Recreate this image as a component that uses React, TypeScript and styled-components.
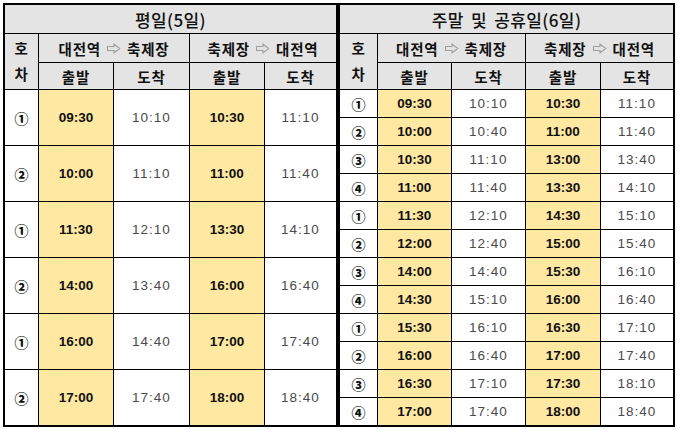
import styled, { createGlobalStyle } from 'styled-components';

type Row = [string, string, string, string, string];

const weekday: Row[] = [
  ['①', '09:30', '10:10', '10:30', '11:10'],
  ['②', '10:00', '11:10', '11:00', '11:40'],
  ['①', '11:30', '12:10', '13:30', '14:10'],
  ['②', '14:00', '13:40', '16:00', '16:40'],
  ['①', '16:00', '14:40', '17:00', '17:40'],
  ['②', '17:00', '17:40', '18:00', '18:40'],
];

const weekend: Row[] = [
  ['①', '09:30', '10:10', '10:30', '11:10'],
  ['②', '10:00', '10:40', '11:00', '11:40'],
  ['③', '10:30', '11:10', '13:00', '13:40'],
  ['④', '11:00', '11:40', '13:30', '14:10'],
  ['①', '11:30', '12:10', '14:30', '15:10'],
  ['②', '12:00', '12:40', '15:00', '15:40'],
  ['③', '14:00', '14:40', '15:30', '16:10'],
  ['④', '14:30', '15:10', '16:00', '16:40'],
  ['①', '15:30', '16:10', '16:30', '17:10'],
  ['②', '16:00', '16:40', '17:00', '17:40'],
  ['③', '16:30', '17:10', '17:30', '18:10'],
  ['④', '17:00', '17:40', '18:00', '18:40'],
];

const GlobalStyle = createGlobalStyle`
  body {
    margin: 0;
    background: #fff;
    font-family: 'Noto Sans CJK KR', 'Liberation Sans', sans-serif;
  }
`;

const Frame = styled.div`
  box-sizing: border-box;
  width: 672px;
  margin: 3px 0 0 3px;
  border: 2px solid #000;
  display: flex;
  background: #fff;
`;

const Panel = styled.div<{ $cols: string; $rows: number; $rowH: number; $divided?: boolean }>`
  display: grid;
  grid-template-columns: ${(p) => p.$cols};
  grid-template-rows: 28px 28px 26px repeat(${(p) => p.$rows}, ${(p) => p.$rowH}px);
  gap: 1px;
  background: #000;
  border-left: ${(p) => (p.$divided ? '4px double #000' : 'none')};
`;

const Cell = styled.div`
  display: flex;
  align-items: center;
  justify-content: center;
  background: #fff;
  color: #111;
  white-space: nowrap;
`;

const Title = styled(Cell)`
  grid-column: 1 / -1;
  background: #e4e4e4;
  font-size: 17px;
  font-weight: 500;
  letter-spacing: 0.4px;
  word-spacing: 3px;
`;

const HeadCell = styled(Cell)<{ $span?: number }>`
  grid-column: span ${(p) => p.$span ?? 1};
  background: #e4e4e4;
  font-size: 14.5px;
  font-weight: 700;
  letter-spacing: 0.8px;
`;

const BusHead = styled(HeadCell)`
  grid-row: span 2;
  flex-direction: column;
  justify-content: space-around;
  padding: 1px 0 3px;
`;

const ArrowSvg = styled.svg`
  margin: 0 6px 0 5px;
  flex-shrink: 0;
`;

const Arrow = () => (
  <ArrowSvg width="15" height="11" viewBox="0 0 15 11">
    <path d="M1.5 3.5H8V1.2L13.8 5.5 8 9.8V7.5H1.5Z" fill="none" stroke="#a0a0a0" strokeWidth="1.1" strokeLinejoin="miter" />
  </ArrowSvg>
);

const NumCell = styled(Cell)`
  font-size: 14px;
  font-weight: 900;
`;

const TimeCell = styled(Cell)<{ $depart?: boolean }>`
  font-family: 'Liberation Sans', Arial, sans-serif;
  font-size: 13.5px;
  background: ${(p) => (p.$depart ? '#fee8a2' : '#fff')};
  font-weight: ${(p) => (p.$depart ? 700 : 400)};
  color: ${(p) => (p.$depart ? '#111' : '#4a4a4a')};
  letter-spacing: ${(p) => (p.$depart ? '0' : '1px')};
`;

type ScheduleProps = {
  title: string;
  rows: Row[];
  cols: string;
  rowH: number;
  divided?: boolean;
};

// rows are flattened into the parent grid
const Row = styled.div`
  display: contents;
`;

const Schedule = ({ title, rows, cols, rowH, divided }: ScheduleProps) => (
  <Panel $cols={cols} $rows={rows.length} $rowH={rowH} $divided={divided}>
    <Title>{title}</Title>

    <BusHead>
      <span>호</span>
      <span>차</span>
    </BusHead>
    <HeadCell $span={2}>
      대전역<Arrow />축제장
    </HeadCell>
    <HeadCell $span={2}>
      축제장<Arrow />대전역
    </HeadCell>
    <HeadCell>출발</HeadCell>
    <HeadCell>도착</HeadCell>
    <HeadCell>출발</HeadCell>
    <HeadCell>도착</HeadCell>

    {rows.map(([num, goOut, goIn, backOut, backIn], i) => (
      <Row key={i}>
        <NumCell>{num}</NumCell>
        <TimeCell $depart>{goOut}</TimeCell>
        <TimeCell>{goIn}</TimeCell>
        <TimeCell $depart>{backOut}</TimeCell>
        <TimeCell>{backIn}</TimeCell>
      </Row>
    ))}
  </Panel>
);

const App = () => (
  <>
    <GlobalStyle />
    <Frame>
      <Schedule title="평일(5일)" rows={weekday} cols="33px 74px 75px 74px 71px" rowH={55} />
      <Schedule
        title="주말 및 공휴일(6일)"
        rows={weekend}
        cols="37px 73px 73px 74px 72px"
        rowH={27}
        divided
      />
    </Frame>
  </>
);

export default App;
